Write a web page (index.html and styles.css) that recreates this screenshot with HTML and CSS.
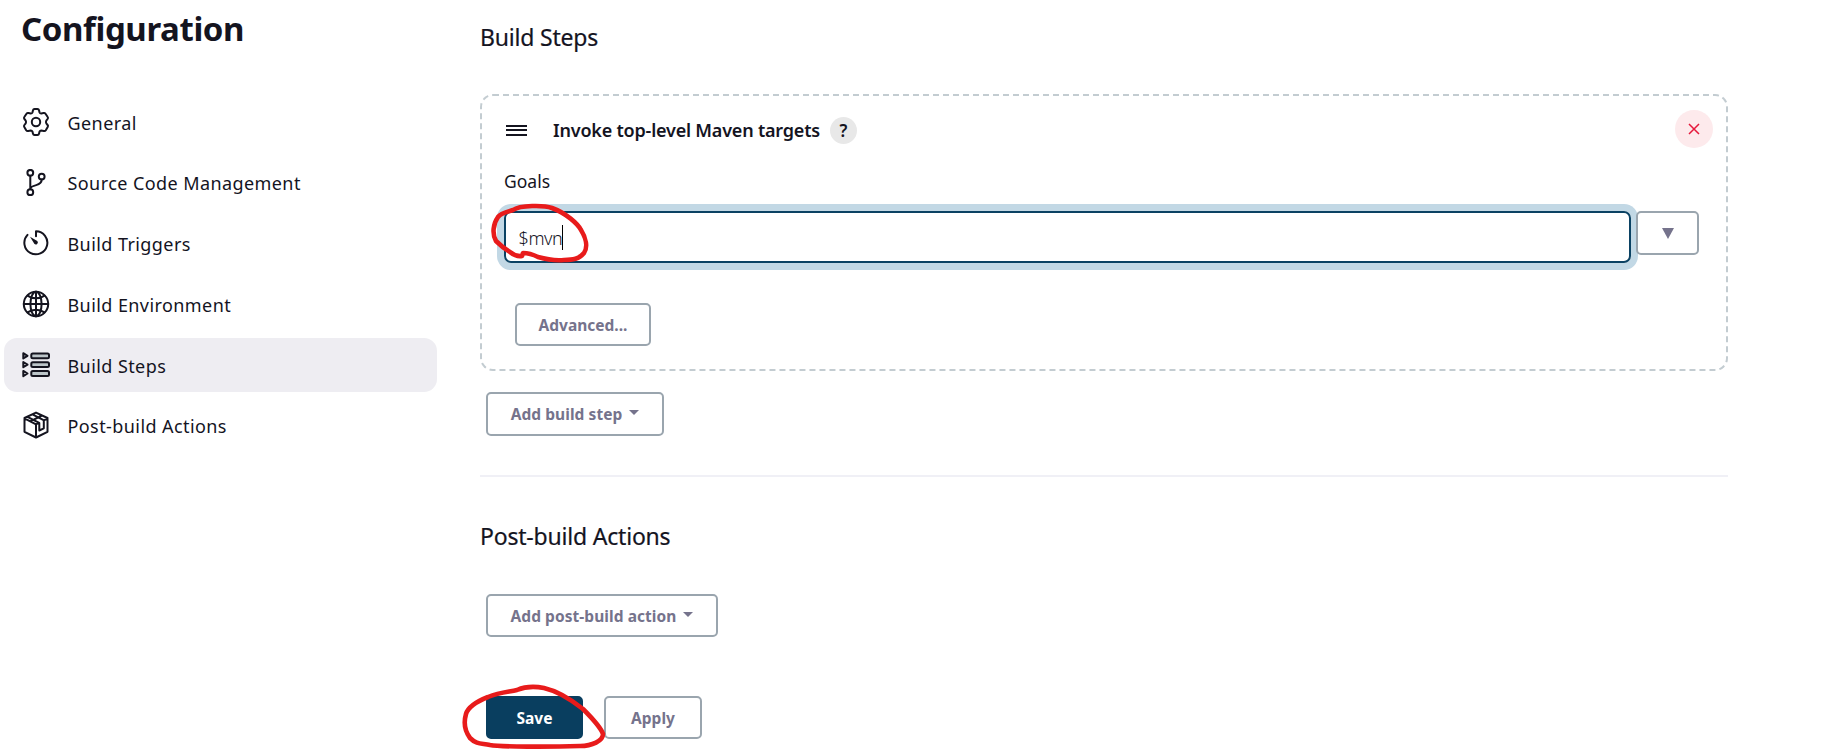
FILE: index.html
```html
<!DOCTYPE html>
<html lang="en">
<head>
<meta charset="utf-8">
<title>Configuration</title>
<link rel="stylesheet" href="styles.css">
</head>
<body>
<div class="page">
  <aside class="sidebar">
    <h1 class="title"><span>Configuration</span></h1>
    <nav class="tasks">
      <a class="task"><svg class="icon" viewBox="0 0 28 28"><path d="M11 2.2Q11.3 1 12.5 1h3Q16.700 1 17 2.200L17.500 4.300Q18 5.400 19.200 5.500L21.500 5Q22.800 4.700 23.500 5.700L25.700 9Q26.400 10 25.600 11L24.300 12.600Q23.600 14 24.300 15.400L25.600 17Q26.400 18 25.700 19L23.800 22.200Q23.100 23.300 21.800 23L19.200 22.500Q18 22.600 17.500 23.700L17 25.800Q16.700 27 15.500 27h-3Q11.300 27 11 25.800L10.500 23.700Q10 22.600 8.800 22.500L6.200 23Q4.900 23.300 4.200 22.200L2.300 19Q1.600 18 2.400 17L3.700 15.400Q4.400 14 3.700 12.600L2.400 11Q1.600 10 2.300 9L4.500 5.700Q5.200 4.700 6.500 5L8.800 5.500Q10 5.400 10.500 4.300Z"/><circle cx="14" cy="14" r="4.200"/></svg><span>General</span></a>
      <a class="task"><svg class="icon" viewBox="0 0 28 28"><circle cx="8.300" cy="3.800" r="2.900"/><circle cx="8.300" cy="23.200" r="2.900"/><circle cx="19.700" cy="7.600" r="2.900"/><path d="M8.300 6.800v13.400M19.700 10.600c0 4-2.500 4.800-5.500 5.500-3 .7-5.900 1.500-5.900 4"/></svg><span class="raised">Source Code Management</span></a>
      <a class="task"><svg class="icon" viewBox="0 0 28 28"><path d="M14 7.200V2.300a11.500 11.500 0 1 1-8.500 3.600"/><path class="solid" d="M8 7.800l7.300 4.300a2 2 0 1 1-3 2.700z"/></svg><span>Build Triggers</span></a>
      <a class="task"><svg class="icon" viewBox="0 0 28 28"><circle cx="14" cy="14" r="12.200"/><ellipse cx="14" cy="14" rx="5.600" ry="12.200"/><path d="M14 1.800v24.400M1.800 14h24.400M5.600 5.600c4.800 3.600 12 3.600 16.800 0M5.600 22.400c4.800-3.600 12-3.600 16.800 0"/></svg><span>Build Environment</span></a>
      <a class="task active"><svg class="icon" viewBox="0 0 28 28"><path d="M1.300 2.200l4.200 2.600-4.200 2.600zM1.300 11l4.200 2.600-4.200 2.600zM1.300 19.900l4.200 2.600-4.200 2.600z"/><rect class="bar" x="9.300" y="2.400" width="17.700" height="4.800" rx="1.500"/><rect class="bar" x="9.300" y="11.200" width="17.700" height="4.800" rx="1.500"/><rect class="bar" x="9.300" y="20.100" width="17.700" height="4.800" rx="1.500"/></svg><span>Build Steps</span></a>
      <a class="task"><svg class="icon" viewBox="0 0 28 28"><path d="M14 1.600L25.500 7v13.800L14 26.500 2.500 20.800V7zM2.500 7.400L14 13.300l2.500-1.200M14 13.300v13M22 9.300l3.500-1.900M8.300 10.300L20 4.500M5.500 5.800l11.700 6M10.500 3.300l11.500 6M17.300 12v7.500l4.500-2.200V9.600"/></svg><span>Post-build Actions</span></a>
    </nav>
  </aside>
  <main class="main">
    <h2 class="heading">Build Steps</h2>
    <section class="step">
      <header class="step-head">
        <i class="drag"></i>
        <b class="step-title">Invoke top-level Maven targets</b>
        <span class="help">?</span>
        <button class="remove" aria-label="Delete"><svg viewBox="0 0 12 12"><path d="M1 1l10 10M11 1L1 11"/></svg></button>
      </header>
      <label class="label">Goals</label>
      <div class="field">
        <div class="input"><span>$mvn</span><i class="caret"></i></div>
        <button class="btn expand"><i></i></button>
      </div>
      <button class="btn advanced"><span>Advanced...</span></button>
    </section>
    <button class="btn add-step"><span>Add build step</span><i class="arrow"></i></button>
    <hr class="rule">
    <h2 class="heading">Post-build Actions</h2>
    <button class="btn add-post"><span>Add post-build action</span><i class="arrow"></i></button>
    <footer class="actions">
      <button class="btn save"><span>Save</span></button>
      <button class="btn apply"><span>Apply</span></button>
    </footer>
  </main>
</div>
<svg class="marks" viewBox="0 0 1831 750"><path d="M513 210C520 205 544 205 552 208C566 213 578 224 581 230C586 238 588 247 584 253C579 259 573 260 564 260C553 261 545 259 538 257C532 254 528 253 523 253L522 256Q516 257 510 252C503 248 500 245 496 241C492 234 493 224 498 217C501 213 507 212 513 210Z"/><path d="M488 697C478 701 468 707 466 714C464 721 464 730 470 738C477 745 482 743 490 745C500 747 550 747 580 746C592 746 603 741 603 734C601 728 594 720 583 709C573 701 557 691 544 688C534 686 524 687 517 690C508 692 500 692 488 697Z"/></svg>
</body>
</html>
```
FILE: styles.css
```css
* { box-sizing: border-box; }
body {
  margin: 0;
  height: 750px;
  overflow: hidden;
  background: #fff;
  color: #14141f;
  font-family: "Noto Sans", "Open Sans", sans-serif;
}
h1, h2 { margin: 0; }
button { font: inherit; padding: 0; }
.page { display: flex; }

.sidebar { width: 437px; padding-left: 4px; }
.title {
  height: 95px;
  padding: 5px 0 0 17px;
  font-size: 33px;
  line-height: 48px;
  font-weight: 700;
  letter-spacing: -0.4px;
}
.tasks { display: flex; flex-direction: column; gap: 6.7px; }
.task {
  display: flex;
  align-items: center;
  gap: 17.500px;
  height: 54px;
  padding: 0 18px;
  border-radius: 13px;
  font-size: 18px;
  line-height: 24px;
  letter-spacing: 0.42px;
  white-space: nowrap;
}
.task span { padding-top: 2px; }
.task .raised { padding-top: 0; }
.active { background: #eeedf2; }
.icon {
  flex: none;
  width: 28px;
  height: 28px;
  fill: none;
  stroke: #14141f;
  stroke-width: 2;
  stroke-linejoin: round;
  stroke-linecap: round;
}
.icon .solid { fill: #14141f; stroke: none; }
.icon .bar { fill: #bcc5c9; }

.main {
  display: flex;
  flex-direction: column;
  align-items: flex-start;
  width: 1248px;
  margin-left: 43px;
}
.heading {
  padding-top: 21px;
  font-size: 23px;
  line-height: 32px;
  font-weight: 400;
  letter-spacing: -0.2px;
  -webkit-text-stroke: 0.2px #14141f;
}
.step {
  width: 1248px;
  height: 277px;
  margin-top: 41px;
  padding: 14px 13px 0 22px;
  border: 2px dashed #c3ccd1;
  border-radius: 13px;
}
.step-head { display: flex; align-items: center; height: 38px; }
.drag {
  width: 21px;
  height: 11px;
  margin: 2px 26px 0 2px;
  border: solid #14141f;
  border-width: 2px 0;
  background: linear-gradient(#14141f, #14141f) center / 100% 2px no-repeat;
}
.step-title { padding-top: 2px; font-size: 18px; letter-spacing: -0.2px; font-weight: 600; }
.help {
  width: 27px;
  height: 27px;
  margin: 2px 0 0 10px;
  border-radius: 50%;
  background: #e8e8e8;
  font-size: 17px;
  line-height: 27px;
  font-weight: 600;
  text-align: center;
}
.remove {
  display: flex;
  align-items: center;
  justify-content: center;
  width: 38px;
  height: 38px;
  margin-left: auto;
  border: 0;
  border-radius: 50%;
  background: #fdeaec;
}
.remove svg { width: 12px; height: 12px; fill: none; stroke: #e6193c; stroke-width: 1.5; }
.label { display: block; padding-top: 21px; font-size: 17.500px; line-height: 24px; }
.field { display: flex; gap: 5px; margin-top: 18px; }
.input {
  display: flex;
  align-items: center;
  width: 1127px;
  height: 52px;
  padding-left: 12.500px;
  border: 2px solid #0b4263;
  border-radius: 7px;
  box-shadow: 0 0 0 7px #c2d8e5;
  font-size: 18px;
  font-weight: 300;
  letter-spacing: -0.4px;
}
.input span { padding-top: 2px; }
.caret { width: 1px; height: 25px; background: #000; }
.btn {
  display: flex;
  align-items: center;
  justify-content: center;
  height: 43px;
  border: 2px solid #9aa5ae;
  border-radius: 5px;
  background: #fff;
  color: #75738c;
  font-size: 15.500px;
  font-weight: 700;
  white-space: nowrap;
}
.btn span { padding-top: 1px; }
.expand { width: 63px; height: 44px; }
.expand i { border: solid transparent; border-width: 11px 6.500px 0; border-top-color: #75738c; }
.arrow { margin: -3px 0 0 7px; border: solid transparent; border-width: 5.500px 5.500px 0; border-top-color: #75738c; }
.advanced { width: 136px; margin: 40px 0 0 11px; }
.add-step { width: 178px; height: 44px; margin: 21px 0 0 6px; letter-spacing: 0.06px; }
.add-step span { padding: 0; }
.rule { width: 100%; height: 2px; margin: 39px 0 22px; border: 0; background: #f0f0f6; }
.add-post { width: 232px; margin: 42px 0 0 6px; letter-spacing: 0.06px; }
.actions { display: flex; gap: 21px; margin: 59px 0 0 6px; }
.save { width: 97px; border-color: #093e5f; background: #093e5f; color: #fff; }
.apply { width: 98px; }
.marks {
  position: absolute;
  inset: 0;
  width: 1831px;
  height: 750px;
  fill: none;
  stroke: #e81b1b;
  stroke-width: 4.600;
  stroke-linejoin: round;
  pointer-events: none;
}
```
